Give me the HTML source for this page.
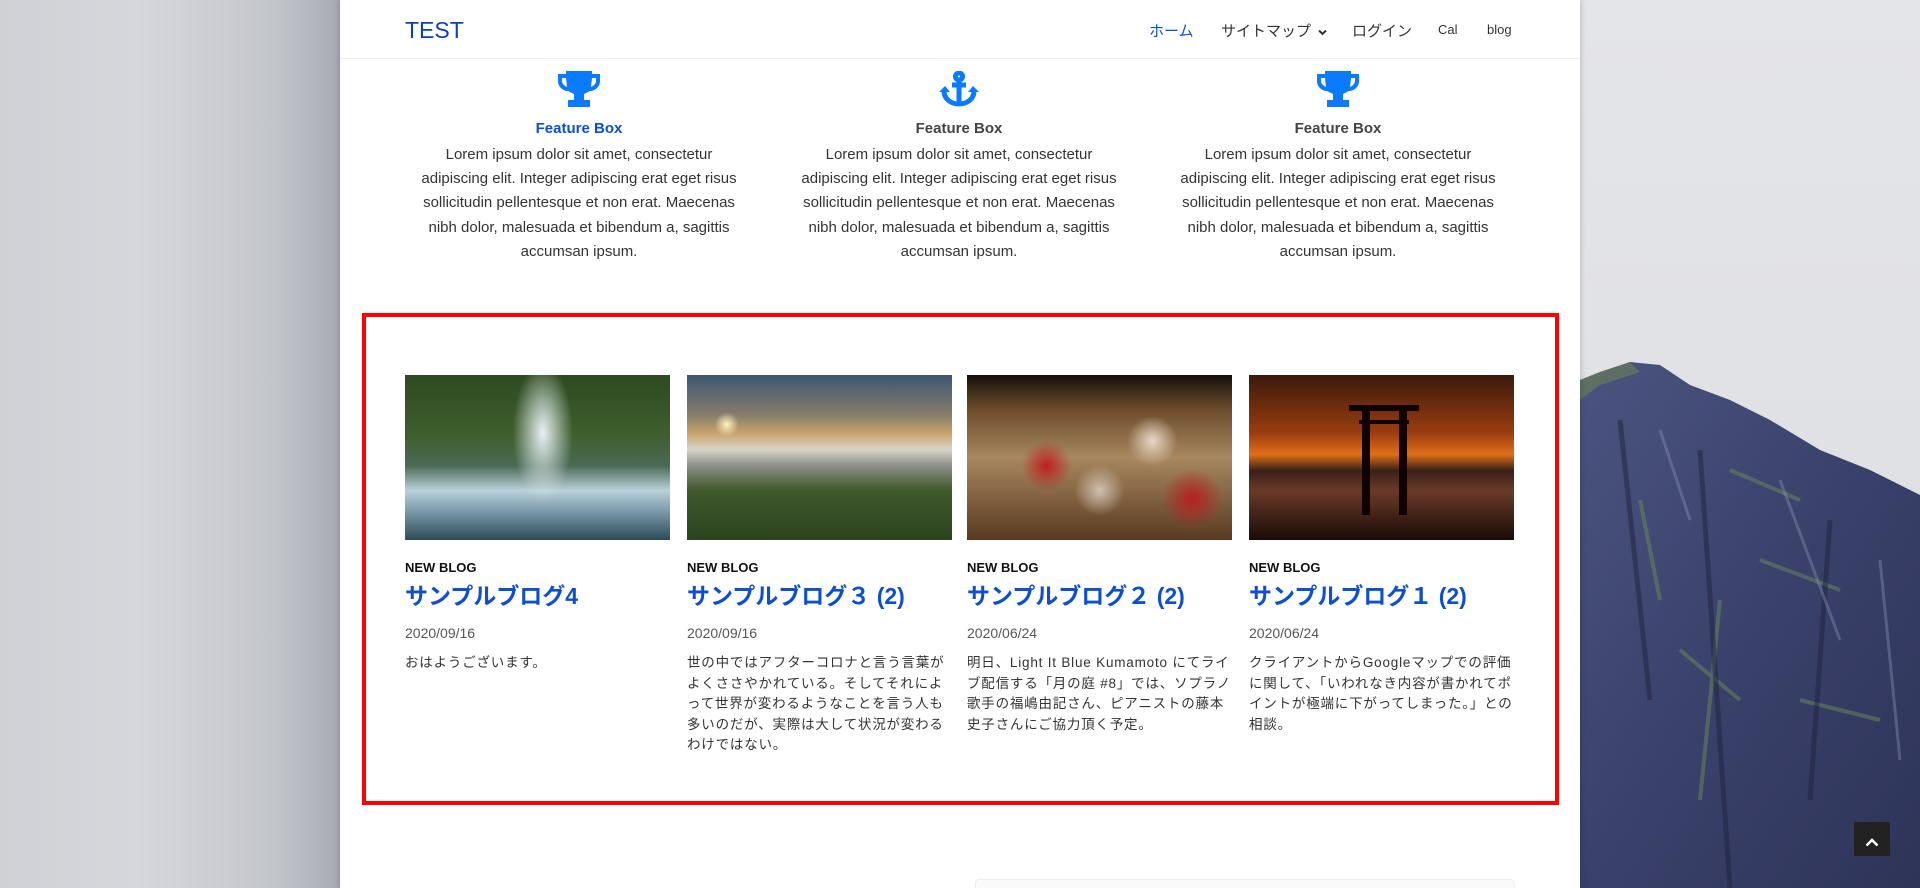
<!DOCTYPE html>
<html style="background:#d6d7dc"><head><meta charset="utf-8"><style>
*{margin:0;padding:0;box-sizing:border-box}
html,body{width:1920px;height:888px;overflow:hidden}
body{position:relative;font-family:"Liberation Sans","Noto Sans CJK JP",sans-serif;background:#d6d7dc}
.bgl{position:absolute;left:0;top:0;width:340px;height:888px;background:linear-gradient(90deg,#cfd1d6 0%,#d5d7dc 40%,#c4c6cd 80%,#a9abb3 100%)}
.bgr{position:absolute;left:1580px;top:0;width:340px;height:888px;background:linear-gradient(180deg,#e4e5e8,#dcdde1)}
.cliff{position:absolute;left:1580px;top:0;width:340px;height:888px}
.panel{position:absolute;left:340px;top:0;width:1240px;height:888px;background:#fff;box-shadow:0 0 6px rgba(0,0,0,.25)}
.nav{position:absolute;left:0;top:0;width:1240px;height:59px;border-bottom:1px solid #eee}
.logo{position:absolute;left:65px;top:17px;font-size:23px;color:#0d3fb5}
.nav a{position:absolute;top:20px;font-size:15px;color:#333;text-decoration:none}
.fb{position:absolute;top:71px;width:340px;text-align:center}
.fb h4{font-size:15px;color:#444;margin-top:8px;font-weight:bold}
.fb p{font-size:15px;line-height:24.2px;color:#333;margin:6px auto 0;width:318px}
.red{position:absolute;left:22px;top:313px;width:1197px;height:492px;border:4px solid #f00}
.card{position:absolute;top:375px;width:265px}
.img{width:265px;height:165px}
.nb{font-size:13px;font-weight:bold;color:#111;margin-top:20px}
.tt{font-size:23px;font-weight:bold;color:#0d4fcf;margin-top:2px;white-space:nowrap}
.dt{font-size:14px;color:#555;margin-top:14px}
.tx{font-size:13.5px;color:#333;line-height:20.5px;margin-top:12px;letter-spacing:.8px}
</style></head><body>
<div class="bgl"></div><div class="bgr"></div>
<svg class="cliff" viewBox="0 0 340 888" width="340" height="888">
<defs><linearGradient id="rk" x1="0" y1="0" x2="1" y2="1"><stop offset="0" stop-color="#4b5480"/><stop offset=".5" stop-color="#3a416b"/><stop offset="1" stop-color="#2e3458"/></linearGradient></defs>
<path d="M0 380 L20 372 L50 362 L80 365 L110 385 L150 400 L190 420 L240 450 L290 470 L340 495 L340 888 L0 888 Z" fill="url(#rk)"/>
<path d="M0 380 L20 372 L50 362 L60 372 L20 385 L0 400Z" fill="#6a7a5a" opacity=".7"/>
<path d="M150 470 L220 500 M180 560 L260 590 M100 650 L160 700 M220 700 L300 720 M60 500 L80 600 M140 600 L120 800" stroke="#6d8a58" stroke-width="4" opacity=".5"/>
<path d="M40 420 L70 700 M120 450 L150 888 M250 520 L230 800" stroke="#20243f" stroke-width="5" opacity=".5"/>
<path d="M80 430 L110 520 M200 480 L260 640 M300 560 L320 760" stroke="#8a92b8" stroke-width="3" opacity=".4"/>
</svg>
<div class="panel">
<div class="nav">
<div class="logo">TEST</div>
<a style="left:809px;color:#0d4fcf">ホーム</a>
<a style="left:881px">サイトマップ <svg width="9" height="7" viewBox="0 0 9 7" style="margin-left:3px"><path d="M1 1.5l3.5 3.5 3.5-3.5" fill="none" stroke="#333" stroke-width="2"/></svg></a>
<a style="left:1012px">ログイン</a>
<a style="left:1098px;font-size:13px;top:22px">Cal</a>
<a style="left:1147px;font-size:13px;top:22px">blog</a>
</div>
<div class="fb" style="left:69px">
<svg width="42" height="36" viewBox="0 0 42 36"><path fill="#0a7bff" d="M8 0h26v3h8v7c0 6-5 10-10 10l-6 3v6h6v7H10v-7h6v-6l-6-3C5 20 0 16 0 10V3h8z M4 7v3c0 3 3 5 5 6L8 7z M38 7h-4l-1 9c2-1 5-3 5-6z" fill-rule="evenodd"/></svg>
<h4 style="color:#0d4fcf">Feature Box</h4>
<p>Lorem ipsum dolor sit amet, consectetur adipiscing elit. Integer adipiscing erat eget risus sollicitudin pellentesque et non erat. Maecenas nibh dolor, malesuada et bibendum a, sagittis accumsan ipsum.</p></div>
<div class="fb" style="left:449px">
<svg width="40" height="36" viewBox="0 0 40 36"><g fill="none" stroke="#0a7bff" stroke-width="5"><circle cx="20" cy="5.5" r="3.5"/><path d="M20 9v24M13 14h14M5 20c0 8 7 13 15 13s15-5 15-13"/></g><path fill="#0a7bff" d="M0 21l6-6 5 6zM40 21l-6-6-5 6z"/></svg>
<h4>Feature Box</h4>
<p>Lorem ipsum dolor sit amet, consectetur adipiscing elit. Integer adipiscing erat eget risus sollicitudin pellentesque et non erat. Maecenas nibh dolor, malesuada et bibendum a, sagittis accumsan ipsum.</p></div>
<div class="fb" style="left:828px">
<svg width="42" height="36" viewBox="0 0 42 36"><path fill="#0a7bff" d="M8 0h26v3h8v7c0 6-5 10-10 10l-6 3v6h6v7H10v-7h6v-6l-6-3C5 20 0 16 0 10V3h8z M4 7v3c0 3 3 5 5 6L8 7z M38 7h-4l-1 9c2-1 5-3 5-6z" fill-rule="evenodd"/></svg>
<h4>Feature Box</h4>
<p>Lorem ipsum dolor sit amet, consectetur adipiscing elit. Integer adipiscing erat eget risus sollicitudin pellentesque et non erat. Maecenas nibh dolor, malesuada et bibendum a, sagittis accumsan ipsum.</p></div>
<div class="red"></div>
<div class="card" style="left:65px"><div class="img" style="background:radial-gradient(ellipse 30px 70px at 52% 35%,#e8f2f4,transparent),linear-gradient(180deg,#2d4a22 0%,#3e5e2c 35%,#4a6a55 55%,#b9d1da 70%,#6f8fa0 85%,#2f4a55 100%)"></div>
<div class="nb">NEW BLOG</div><div class="tt">サンプルブログ4</div><div class="dt">2020/09/16</div><div class="tx">おはようございます。</div></div>
<div class="card" style="left:347px"><div class="img" style="background:radial-gradient(circle 12px at 15% 30%,#fff3c0,transparent),linear-gradient(180deg,#3d5673 0%,#8a7f6b 25%,#c7a36a 35%,#d9d4c9 45%,#8c8f88 55%,#3f5a2a 70%,#2c4220 100%)"></div>
<div class="nb">NEW BLOG</div><div class="tt">サンプルブログ３ (2)</div><div class="dt">2020/09/16</div><div class="tx">世の中ではアフターコロナと言う言葉がよくささやかれている。そしてそれによって世界が変わるようなことを言う人も多いのだが、実際は大して状況が変わるわけではない。</div></div>
<div class="card" style="left:627px"><div class="img" style="background:radial-gradient(circle 25px at 30% 55%,#c02020,transparent),radial-gradient(circle 25px at 70% 40%,#e8d8c8,transparent),radial-gradient(circle 25px at 50% 70%,#d0c0b0,transparent),radial-gradient(circle 30px at 85% 75%,#b82020,transparent),linear-gradient(180deg,#15100c 0%,#6a4a2a 20%,#a88860 50%,#5a3a20 100%)"></div>
<div class="nb">NEW BLOG</div><div class="tt">サンプルブログ２ (2)</div><div class="dt">2020/06/24</div><div class="tx">明日、Light It Blue Kumamoto にてライブ配信する「月の庭 #8」では、ソプラノ歌手の福嶋由記さん、ピアニストの藤本史子さんにご協力頂く予定。</div></div>
<div class="card" style="left:909px"><div class="img" style="position:relative;background:linear-gradient(180deg,#3a1a0c 0%,#9a3c10 35%,#e07018 48%,#3a2018 58%,#6a3a28 70%,#1a0c08 100%)"><div style="position:absolute;left:100px;top:30px;width:70px;height:6px;background:#100"></div><div style="position:absolute;left:110px;top:45px;width:50px;height:4px;background:#100"></div><div style="position:absolute;left:113px;top:30px;width:8px;height:110px;background:#100"></div><div style="position:absolute;left:150px;top:30px;width:8px;height:110px;background:#100"></div></div>
<div class="nb">NEW BLOG</div><div class="tt">サンプルブログ１ (2)</div><div class="dt">2020/06/24</div><div class="tx">クライアントからGoogleマップでの評価に関して、「いわれなき内容が書かれてポイントが極端に下がってしまった。」との相談。</div></div>
<div style="position:absolute;left:635px;top:879px;width:540px;height:20px;border:1px solid #eee;border-radius:4px;background:#fafafa"></div>
</div>
<div style="position:absolute;left:1854px;top:822px;width:36px;height:34px;background:#222;text-align:center;padding-top:12px"><svg width="14" height="9" viewBox="0 0 14 9"><path d="M1.5 7.5L7 2l5.5 5.5" fill="none" stroke="#fff" stroke-width="2.5"/></svg></div>
</body></html>
